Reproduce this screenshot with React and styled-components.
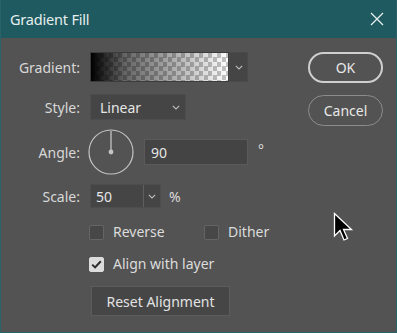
import React from "react";
import styled, { createGlobalStyle } from "styled-components";

const Global = createGlobalStyle`
  html, body { margin: 0; padding: 0; background: #535353; }
  body { font-family: "Noto Sans", "Open Sans", sans-serif; }
`;

const Dialog = styled.div`
  width: 397px;
  height: 333px;
  box-sizing: border-box;
  background: #535353;
  border: 1px solid #2a6367;
  border-top: none;
  display: flex;
  flex-direction: column;
  position: relative;
  overflow: hidden;
  color: #dcdcdc;
  font-size: 14px;
`;

const TitleBar = styled.div`
  height: 38px;
  margin: 0 -1px;
  background: #1e5a5f;
  display: flex;
  align-items: center;
  justify-content: space-between;
  padding: 0 13px 0 10px;
  color: #e6eeee;
  font-size: 14.5px;
  letter-spacing: -0.2px;
`;

const Body = styled.div`
  flex: 1;
  display: flex;
  padding: 14px 13px 0 0;
`;

const Form = styled.div`
  flex: 1;
  display: flex;
  flex-direction: column;
`;

const Row = styled.div`
  display: grid;
  grid-template-columns: 79px auto;
  column-gap: 10px;
  align-items: center;
  margin-top: ${(p) => p.$mt || 0}px;
`;

const Label = styled.div`
  text-align: right;
  color: #d8d8d8;
  font-size: 14px;
`;

const Controls = styled.div`
  display: flex;
  align-items: center;
  gap: ${(p) => p.$gap || 0}px;
  margin-left: ${(p) => p.$ml || 0}px;
`;

const Swatch = styled.div`
  width: 139px;
  height: 30px;
  box-sizing: border-box;
  background:
    linear-gradient(to right, rgba(0,0,0,1) 0%, rgba(0,0,0,0.6) 25%, rgba(0,0,0,0) 100%),
    repeating-conic-gradient(#ffffff 0% 25%, #c4c4c4 0% 50%) 0 0 / 9px 9px;
  border: 1px solid #3c3c3c;
`;

const ArrowBox = styled.div`
  width: ${(p) => p.$w || 18}px;
  height: 100%;
  display: flex;
  align-items: center;
  justify-content: center;
  background: #454545;
  border-left: 1px solid ${(p) => (p.$sep ? "#5e5e5e" : "transparent")};
  box-sizing: border-box;
`;

const GradDrop = styled.div`
  height: 30px;
  display: flex;
  border: 1px solid #4a4a4a;
  box-sizing: border-box;
`;

const Select = styled.div`
  width: ${(p) => p.$w}px;
  height: ${(p) => p.$h}px;
  box-sizing: border-box;
  background: #454545;
  border: 1px solid #4d4d4d;
  display: flex;
  align-items: center;
  justify-content: space-between;
  padding-left: ${(p) => p.$pl || 9}px;
  color: #e6e6e6;
  font-size: 14px;
`;

const Input = styled.div`
  width: 104px;
  height: 26px;
  box-sizing: border-box;
  background: #444444;
  border: 1px solid #5a5a5a;
  display: flex;
  align-items: center;
  padding-left: 6px;
  color: #e6e6e6;
  font-size: 14px;
`;

const Unit = styled.span`
  color: #dcdcdc;
  font-size: 14px;
  margin-top: ${(p) => p.$mt || 0}px;
`;

const CheckRow = styled.div`
  display: flex;
  align-items: center;
  margin-left: 88px;
  margin-top: ${(p) => p.$mt || 0}px;
`;

const CheckItem = styled.label`
  display: flex;
  align-items: center;
  gap: 9px;
  width: ${(p) => p.$w || "auto"};
  color: #dcdcdc;
  font-size: 14px;
  line-height: 16px;
`;

const Box = styled.span`
  width: 15px;
  height: 15px;
  box-sizing: border-box;
  border-radius: 2px;
  background: ${(p) => (p.$on ? "#dcdcdc" : "#474747")};
  border: 1px solid ${(p) => (p.$on ? "#dcdcdc" : "#656565")};
  display: flex;
  align-items: center;
  justify-content: center;
`;

const ResetButton = styled.div`
  margin-left: 90px;
  margin-top: ${(p) => p.$mt || 0}px;
  width: 139px;
  height: 30px;
  box-sizing: border-box;
  background: #464646;
  border: 1px solid #5c5c5c;
  display: flex;
  align-items: center;
  justify-content: center;
  color: #e2e2e2;
  font-size: 14px;
`;

const Side = styled.div`
  display: flex;
  flex-direction: column;
  gap: 12px;
`;

const Pill = styled.div`
  width: 75px;
  height: ${(p) => p.$h}px;
  box-sizing: border-box;
  border-radius: 16px;
  border: ${(p) => (p.$primary ? "2px solid #cfcfcf" : "1.5px solid #8c8c8c")};
  display: flex;
  align-items: center;
  justify-content: center;
  color: #e8e8e8;
  font-size: 14px;
`;

const Cursor = styled.svg`
  position: absolute;
  left: 332px;
  top: 212px;
`;

const Chevron = ({ w = 8 }) => (
  <svg width={w} height="5" viewBox="0 0 8 5">
    <path d="M0.8 0.8 L4 4 L7.2 0.8" fill="none" stroke="#bdbdbd" strokeWidth="1.1" />
  </svg>
);

const Dial = () => (
  <svg width="46" height="46" viewBox="0 0 46 46">
    <circle cx="23" cy="23" r="22" fill="none" stroke="#c4c4c4" strokeWidth="1.2" />
    <line x1="23" y1="23" x2="23" y2="2" stroke="#c4c4c4" strokeWidth="1.3" />
    <circle cx="23" cy="23" r="2.4" fill="#c4c4c4" />
  </svg>
);

const Check = () => (
  <svg width="11" height="9" viewBox="0 0 11 9">
    <path d="M1.2 4.6 L4.1 7.4 L9.8 1.3" fill="none" stroke="#2c2c2c" strokeWidth="2" />
  </svg>
);

export default function App() {
  return (
    <>
      <Global />
      <Dialog>
        <TitleBar>
          <span>Gradient Fill</span>
          <svg width="14" height="14" viewBox="0 0 14 14">
            <path d="M1 1 L13 13 M13 1 L1 13" stroke="#e6eeee" strokeWidth="1.3" />
          </svg>
        </TitleBar>
        <Body>
          <Form>
            <Row>
              <Label>Gradient:</Label>
              <Controls>
                <Swatch />
                <GradDrop>
                  <ArrowBox $w={17}>
                    <Chevron />
                  </ArrowBox>
                </GradDrop>
              </Controls>
            </Row>
            <Row $mt={12}>
              <Label>Style:</Label>
              <Select $w={96} $h={26}>
                <span>Linear</span>
                <ArrowBox $w={20}>
                  <Chevron />
                </ArrowBox>
              </Select>
            </Row>
            <Row $mt={9}>
              <Label>Angle:</Label>
              <Controls $gap={10} $ml={-2}>
                <Dial />
                <Input>90</Input>
                <Unit $mt={-6}>°</Unit>
              </Controls>
            </Row>
            <Row $mt={9}>
              <Label>Scale:</Label>
              <Controls $gap={8}>
                <Select $w={71} $h={24} $pl={5}>
                  <span>50</span>
                  <ArrowBox $w={17} $sep>
                    <Chevron />
                  </ArrowBox>
                </Select>
                <Unit>%</Unit>
              </Controls>
            </Row>
            <CheckRow $mt={16}>
              <CheckItem $w="115px">
                <Box />
                Reverse
              </CheckItem>
              <CheckItem>
                <Box />
                Dither
              </CheckItem>
            </CheckRow>
            <CheckRow $mt={16}>
              <CheckItem>
                <Box $on>
                  <Check />
                </Box>
                Align with layer
              </CheckItem>
            </CheckRow>
            <ResetButton $mt={14}>Reset Alignment</ResetButton>
          </Form>
          <Side>
            <Pill $primary $h={31}>OK</Pill>
            <Pill $h={31}>Cancel</Pill>
          </Side>
        </Body>
        <Cursor width="21" height="32" viewBox="0 0 21 32">
          <path
            d="M1.5 1.5 L1.5 24 L7 18.5 L11 28 L14.5 26.5 L10.5 17.5 L18.5 17.5 Z"
            fill="#000"
            stroke="#fff"
            strokeWidth="1.3"
            strokeLinejoin="miter"
          />
        </Cursor>
      </Dialog>
    </>
  );
}
